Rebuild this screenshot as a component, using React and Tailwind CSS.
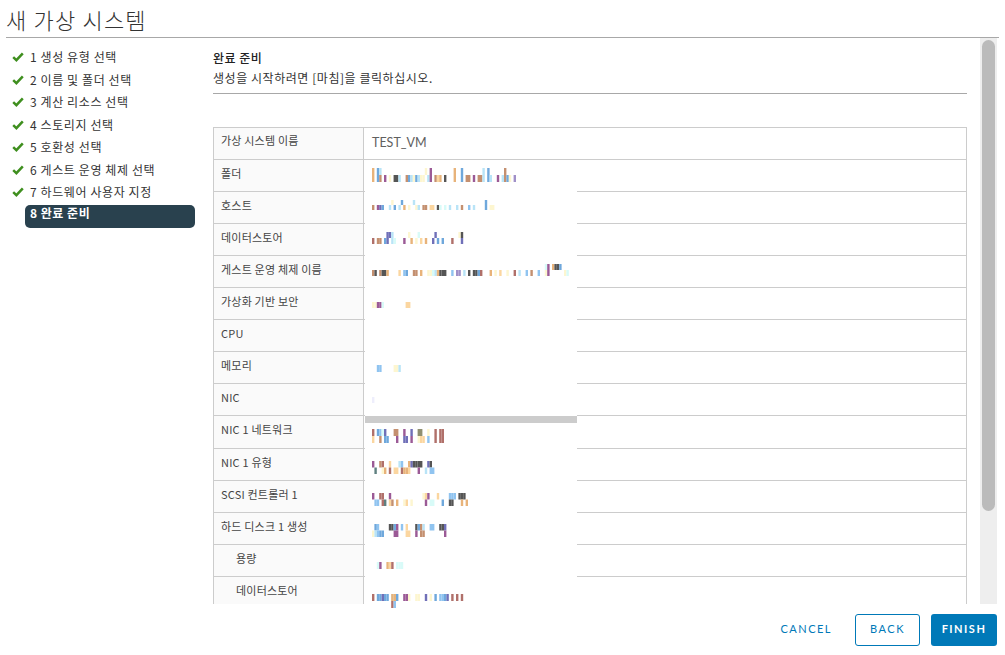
const KR = '"Noto Sans CJK KR", "Noto Sans", sans-serif';
const LAT = 'Lato, "Noto Sans CJK KR", sans-serif';

const C = {
  b: '#6fa8dc', u: '#90c4f0', l: '#b9e4f7', c: '#d8fbf8', o: '#e8b37a', p: '#fbd6a0', y: '#fdf6d0',
  m: '#9b5a96', r: '#b0706a', n: '#c49070', g: '#555555', v: '#7070b8', k: '#a090c8', e: '#8f8f70', t: '#5f8080', w: '#eeeefc',
};

const steps = ['1 생성 유형 선택', '2 이름 및 폴더 선택', '3 계산 리소스 선택', '4 스토리지 선택', '5 호환성 선택', '6 게스트 운영 체제 선택', '7 하드웨어 사용자 지정'];

const rows = [
  ['폴더'], ['호스트'], ['데이터스토어'], ['게스트 운영 체제 이름'], ['가상화 기반 보안'], ['CPU'], ['메모리'], ['NIC'],
  ['NIC 1 네트워크'], ['NIC 1 유형'], ['SCSI 컨트롤러 1'], ['하드 디스크 1 생성'], ['용량', true], ['데이터스토어', true],
];

// y is measured from the top of the overlay (page y 160). Each band lists "column + colour" tokens.
const mosaics = [
  { y: 8, h: 7, bands: ['0o 2b 3l 22y 24m 34o 37b 46l 48b 55n', '0o 2b 3n 5m 7y 9y 9g 10g 11l 14n 15b 16l 17y 18b 19l 20y 21y 23l 24m 26n 27p 28o 30g 34o 37b 39n 40n 42m 44n 45n 46l 48b 49l 52m 54l 55n 56b 57y 59k'] },
  { y: 40, h: 5, bands: ['8y 12b 17l 47b', '0n 2m 3v 4b 7l 9b 11l 13o 15y 18y 19l 21n 22n 24p 25p 27g 28c 30c 32l 35l 37n 40u 42l 47b 49y 50y'] },
  { y: 72, h: 6, bands: ['6v 7v 8l 15y 19c 26v 36y 37g', '0r 2n 3n 5b 6v 8l 9c 13m 16o 18y 20p 22o 25v 27b 29b 33r 37v'] },
  { y: 104, h: 6, bands: ['72c 73m 75o 76g 77g 78b', '0n 1g 3n 4g 5g 6o 11p 13u 14b 17n 18n 20o 23y 24y 25c 26l 27o 28g 29g 30g 33u 35k 36k 38l 40g 42g 43g 44b 45r 49o 51y 53p 56y 59r 61l 64u 66n 69u 72y 73m 80y 81c'] },
  { y: 142, h: 6, bands: ['0y 1y 2m 3m 4c 14p 15p'] },
  { y: 205, h: 7, bands: ['2u 3u 9y 10y 11l'] },
  { y: 237, h: 6, bands: ['0w'] },
  { y: 269, h: 7, bands: ['0r 2b 3u 4c 5v 9n 10n 13m 16v 19e 20e 23y 26r 28r 29r', '0p 3n 5b 6b 10m 13v 14v 16m 19y 20p 21p 23u 26r 28r 29r'] },
  { y: 301, h: 6.5, bands: ['0m 3n 4r 7p 11l 12u 15o 16v 17g 18g 19g 20g 23v 24g', '1t 4y 5o 7r 9p 10p 12r 13o 14o 15p 19m 22l 24u 25u'] },
  { y: 333, h: 6.5, bands: ['0m 3r 4r 7m 21y 22p 23m 27p 32u 33u 34u 36g 37g 38g', '1u 2u 4r 5t 7p 8n 10o 13y 14p 16y 22m 24c 25c 29b 32g 33g 37o 39o'] },
  { y: 364, h: 6.5, bands: ['1b 2u 7g 8g 9b 10m 12u 14p 18g 19b 20n 21l 24u 25u 28g 29g 30v', '0y 1l 2u 3b 4b 9m 10m 14p 15p 18m 20n 21n 30m'] },
  { y: 402, h: 7, bands: ['2c 3m 6o 7p 8r 10c 11c 12c'] },
  { y: 434, h: 7, bands: ['0r 2b 3b 4v 5b 6b 8l 8o 9o 10b 13m 14m 15y 18y 19y 22v 24y 26b 28u 29u 30b 31v 33r 35r 37r', '8r 9u'] },
];

function Mosaic() {
  const cells = [];
  mosaics.forEach((row, ri) => {
    row.bands.forEach((band, bi) => {
      band.split(' ').forEach((token, ti) => {
        const col = parseInt(token, 10);
        const ch = token[token.length - 1];
        cells.push(<rect key={`${ri}-${bi}-${ti}`} x={7 + col * 2.4} y={row.y + bi * row.h} width="2.4" height={row.h} fill={C[ch]} />);
      });
    });
  });
  return (
    <svg width="212" height="448" className="absolute left-0 top-0 overflow-visible">
      {cells}
    </svg>
  );
}

function Check() {
  return (
    <svg width="12" height="10" viewBox="0 0 12 10" className="shrink-0">
      <path d="M1.2 5.2 L4.4 8.2 L10.8 1.4" fill="none" stroke="#3f8f1f" strokeWidth="2.5" />
    </svg>
  );
}

export default function App() {
  return (
    <div className="relative w-[1005px] h-[655px] bg-white overflow-hidden text-[#333]" style={{ fontFamily: KR }}>
      <div className="mx-[6px] h-[38px] border-b border-[#a8a8a8] text-[22px] font-light leading-[38px] tracking-[1.2px] text-[#333]">새 가상 시스템</div>

      <div className="flex h-[566px]">
        <div className="w-[205px] shrink-0 pl-3 pt-[8px]">
          {steps.map((s) => (
            <div key={s} className="flex items-center h-[22.5px] text-[12px] tracking-[0.6px] text-[#333]">
              <Check />
              <span className="ml-[6px]">{s}</span>
            </div>
          ))}
          <div className="ml-[13px] mt-[1px] w-[170px] h-[23px] rounded-[5px] bg-[#29414e] pl-[5px] text-[12px] font-bold leading-[16px] tracking-[0.5px] text-white">8 완료 준비</div>
        </div>

        <div className="w-[775px] pl-2 pt-[11px] overflow-hidden">
          <div className="w-[754px] h-[45px] border-b border-[#a8a8a8]">
            <div className="text-[12px] font-medium leading-[18px] tracking-[0.5px] text-[#222]">완료 준비</div>
            <div className="text-[12px] leading-[21px] tracking-[0.55px] text-[#333]">생성을 시작하려면 [마침]을 클릭하십시오.</div>
          </div>
          <div className="mt-[33px] w-[754px] border-t border-x border-[#ccc]">
            <div className="flex h-[32px] border-b border-[#ccc]">
              <div className="w-[150px] border-r border-[#ccc] bg-[#fafafa] pl-[7px] pt-[3px] text-[11px] leading-[18px] tracking-[0.2px] text-[#444]">가상 시스템 이름</div>
              <div className="pl-[8px] pt-[5px] text-[12.5px] leading-[20px] text-[#606060]" style={{ fontFamily: LAT }}>TEST_VM</div>
            </div>
            {rows.map(([label, indent], i) => (
              <div key={i} className={`flex border-b border-[#ccc] ${i === 8 ? 'h-[33px]' : 'h-[32px]'}`}>
                <div className={`w-[150px] border-r border-[#ccc] bg-[#fafafa] pt-[4px] text-[11px] leading-[18px] tracking-[0.2px] text-[#444] ${indent ? 'pl-[22px]' : 'pl-[7px]'}`}>{label}</div>
              </div>
            ))}
          </div>
        </div>

        <div className="w-[17px] bg-[#eeeeee] pt-[2px] flex justify-center">
          <div className="w-[13px] h-[471px] rounded-full bg-[#bbbbbb]" />
        </div>
      </div>

      <div className="flex items-center justify-end h-[51px] pr-[8px] text-[11px] tracking-[1.5px]" style={{ fontFamily: LAT }}>
        <span className="mr-[23px] text-[#0079b8]">CANCEL</span>
        <span className="mr-[11px] flex items-center justify-center w-[65px] h-[32px] rounded-[3px] border border-[#0079b8] text-[#0079b8]">BACK</span>
        <span className="flex items-center justify-center w-[66px] h-[32px] rounded-[3px] bg-[#0079b8] font-bold text-white">FINISH</span>
      </div>

      <div className="absolute left-[365px] top-[160px] w-[212px] h-[444px] bg-white">
        <div className="absolute left-0 top-[256px] w-full h-[7px] bg-[#cccccc]" />
        <Mosaic />
      </div>
    </div>
  );
}
